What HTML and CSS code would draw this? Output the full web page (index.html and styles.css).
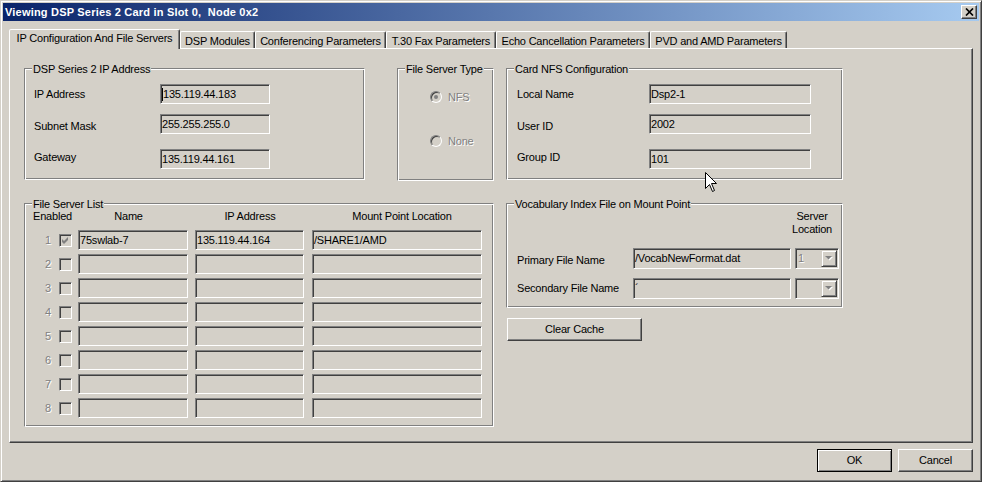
FILE: index.html
```html
<!DOCTYPE html>
<html>
<head>
<meta charset="utf-8">
<title>Viewing DSP Series 2 Card</title>
<link rel="stylesheet" href="styles.css">
</head>
<body>
<div class="window">
  <div class="titlebar">
    <span class="title">Viewing DSP Series 2 Card in Slot 0,  Node 0x2</span>
    <span class="close"><svg width="9" height="8" viewBox="0 0 9 8"><path d="M1 0.5 L8 7.5 M8 0.5 L1 7.5" stroke="#000" stroke-width="1.7" fill="none"/></svg></span>
  </div>

  <div class="tabs">
    <div class="tab selected t1">IP Configuration And File Servers</div>
    <div class="tab t2">DSP Modules</div>
    <div class="tab t3">Conferencing Parameters</div>
    <div class="tab t4">T.30 Fax Parameters</div>
    <div class="tab t5">Echo Cancellation Parameters</div>
    <div class="tab t6">PVD and AMD Parameters</div>
  </div>

  <div class="panel">
    <div class="row1">
      <div class="group g-ip">
        <div class="gtitle">DSP Series 2 IP Address</div>
        <div class="frow">
          <span class="flabel">IP Address</span>
          <span class="edit w110"><span class="caret"></span>135.119.44.183</span>
        </div>
        <div class="frow fr2">
          <span class="flabel down">Subnet Mask</span>
          <span class="edit w110">255.255.255.0</span>
        </div>
        <div class="frow fr3">
          <span class="flabel up">Gateway</span>
          <span class="edit w110">135.119.44.161</span>
        </div>
      </div>

      <div class="group g-fst">
        <div class="gtitle">File Server Type</div>
        <div class="rrow"><span class="radio on"></span><span class="dis rtext">NFS</span></div>
        <div class="rrow rr2"><span class="radio"></span><span class="dis rtext">None</span></div>
      </div>

      <div class="group g-nfs">
        <div class="gtitle">Card NFS Configuration</div>
        <div class="frow">
          <span class="flabel">Local Name</span>
          <span class="edit w162">Dsp2-1</span>
        </div>
        <div class="frow fr2">
          <span class="flabel down">User ID</span>
          <span class="edit w162">2002</span>
        </div>
        <div class="frow fr3">
          <span class="flabel up">Group ID</span>
          <span class="edit w162">101</span>
        </div>
      </div>
    </div>

    <div class="row2">
      <div class="group g-fsl">
        <div class="gtitle">File Server List</div>
        <div class="lhead">
          <span class="h-en">Enabled</span>
          <span class="h-name">Name</span>
          <span class="h-ip">IP Address</span>
          <span class="h-mp">Mount Point Location</span>
        </div>
        <div class="lrows">
          <div class="lrow"><span class="num dis">1</span><span class="chk"><svg width="11" height="11" viewBox="0 0 11 11"><path d="M2 4 L4 6 L8 2 L8 5 L4 9 L2 7 Z" fill="#808080"/></svg></span><span class="edit c-name">75swlab-7</span><span class="edit c-ip">135.119.44.164</span><span class="edit c-mp">/SHARE1/AMD</span></div>
          <div class="lrow"><span class="num dis">2</span><span class="chk"></span><span class="edit c-name"></span><span class="edit c-ip"></span><span class="edit c-mp"></span></div>
          <div class="lrow"><span class="num dis">3</span><span class="chk"></span><span class="edit c-name"></span><span class="edit c-ip"></span><span class="edit c-mp"></span></div>
          <div class="lrow"><span class="num dis">4</span><span class="chk"></span><span class="edit c-name"></span><span class="edit c-ip"></span><span class="edit c-mp"></span></div>
          <div class="lrow"><span class="num dis">5</span><span class="chk"></span><span class="edit c-name"></span><span class="edit c-ip"></span><span class="edit c-mp"></span></div>
          <div class="lrow"><span class="num dis">6</span><span class="chk"></span><span class="edit c-name"></span><span class="edit c-ip"></span><span class="edit c-mp"></span></div>
          <div class="lrow"><span class="num dis">7</span><span class="chk"></span><span class="edit c-name"></span><span class="edit c-ip"></span><span class="edit c-mp"></span></div>
          <div class="lrow"><span class="num dis">8</span><span class="chk"></span><span class="edit c-name"></span><span class="edit c-ip"></span><span class="edit c-mp"></span></div>
        </div>
      </div>

      <div class="rightcol">
        <div class="group g-voc">
          <div class="gtitle">Vocabulary Index File on Mount Point</div>
          <div class="vhead">Server<br>Location</div>
          <div class="vrow">
            <span class="vlabel down2">Primary File Name</span>
            <span class="edit w158">/VocabNewFormat.dat</span>
            <span class="combo"><span class="dis ctext">1</span><span class="dropbtn"><svg width="8" height="5" viewBox="0 0 8 5"><path d="M1 1 H8 L4.5 4.5 Z" fill="#fff"/><path d="M0 0 H7 L3.5 3.5 Z" fill="#808080"/></svg></span></span>
          </div>
          <div class="vrow vr2">
            <span class="vlabel">Secondary File Name</span>
            <span class="edit w158">´</span>
            <span class="combo"><span class="dis ctext"></span><span class="dropbtn"><svg width="8" height="5" viewBox="0 0 8 5"><path d="M1 1 H8 L4.5 4.5 Z" fill="#fff"/><path d="M0 0 H7 L3.5 3.5 Z" fill="#808080"/></svg></span></span>
          </div>
        </div>
        <div class="btn clearcache">Clear Cache</div>
      </div>
    </div>
  </div>

  <div class="buttons">
    <div class="btn default">OK</div>
    <div class="btn">Cancel</div>
  </div>

  <svg class="cursor" width="13" height="21" viewBox="0 0 13 21"><path d="M0.5 0.5 L0.5 16.5 L4.5 12.5 L7.5 19.5 L9.5 18.5 L6.5 11.5 L11.5 11.5 Z" fill="#fff" stroke="#000" stroke-width="1"/></svg>
</div>
</body>
</html>
```

FILE: styles.css
```css
* { box-sizing: border-box; }
html, body { margin: 0; padding: 0; }
body {
  width: 982px;
  height: 482px;
  overflow: hidden;
  background: #d4d0c8;
  font-family: "Liberation Sans", Arial, sans-serif;
  font-size: 11px;
  line-height: 13px;
  letter-spacing: -0.2px;
  color: #000;
}

.window {
  position: relative;
  width: 982px;
  height: 482px;
  border: 1px solid;
  border-color: #d4d0c8 #404040 #404040 #d4d0c8;
  box-shadow: inset 1px 1px #fff, inset -1px -1px #808080;
  padding: 2px;
  display: flex;
  flex-direction: column;
}

.titlebar {
  height: 18px;
  flex: none;
  background: linear-gradient(to right, #0a246a, #a6caf0);
  display: flex;
  align-items: center;
  justify-content: space-between;
  padding: 0 2px;
}
.title { color: #fff; font-weight: bold; white-space: pre; letter-spacing: 0.2px; }
.close {
  width: 16px;
  height: 14px;
  background: #d4d0c8;
  border: 1px solid;
  border-color: #fff #404040 #404040 #fff;
  box-shadow: inset -1px -1px #808080;
  display: flex;
  align-items: center;
  justify-content: center;
}

.tabs {
  display: flex;
  align-items: flex-end;
  height: 19px;
  flex: none;
  margin: 8px 0 0 6px;
}
.tab {
  height: 17px;
  border: 1px solid;
  border-bottom: 0;
  border-color: #fff #404040 transparent #fff;
  box-shadow: inset -1px 0 #808080;
  border-radius: 2px 2px 0 0;
  text-align: center;
  padding-top: 3px;
  white-space: nowrap;
}
.tab.selected {
  height: 20px;
  margin-bottom: -1px;
  position: relative;
  z-index: 1;
  background: #d4d0c8;
  padding-top: 2px;
}
.t1 { width: 171px; }
.t2 { width: 75px; }
.t3 { width: 131px; }
.t4 { width: 110px; }
.t5 { width: 154px; }
.t6 { width: 137px; }

.panel {
  flex: none;
  margin: 0 6px;
  height: 395px;
  border: 1px solid;
  border-color: #fff #404040 #404040 #fff;
  box-shadow: inset -1px -1px #808080;
  padding: 19px 0 0 14px;
}

.row1 { display: flex; align-items: flex-start; height: 113px; }
.row2 { display: flex; align-items: flex-start; margin-top: 22px; }

.group {
  position: relative;
  border: 1px solid;
  border-color: #808080 #fff #fff #808080;
  box-shadow: inset 1px 1px #fff, inset -1px -1px #808080;
  flex: none;
}
.gtitle {
  position: absolute;
  top: -6px;
  left: 7px;
  padding: 0 1px;
  background: #d4d0c8;
  white-space: nowrap;
}

.g-ip { width: 341px; height: 112px; padding: 15px 0 0 9px; }
.g-fst { width: 97px; height: 113px; margin-left: 32px; padding: 22px 0 0 32px; }
.g-nfs { width: 337px; height: 112px; margin-left: 12px; padding: 15px 0 0 10px; }

.frow { display: flex; align-items: center; height: 20px; }
.fr2 { margin-top: 10px; }
.fr3 { margin-top: 15px; }
.g-ip .flabel { width: 126px; }
.g-nfs .flabel { width: 132px; }
.down { padding-top: 4px; }
.up { padding-bottom: 4px; }
.down2 { padding-top: 3px; }

.edit {
  display: flex;
  align-items: center;
  height: 20px;
  flex: none;
  border: 1px solid;
  border-color: #808080 #fff #fff #808080;
  box-shadow: inset 1px 1px #404040, inset -1px -1px #d4d0c8;
  background: #d4d0c8;
  padding-left: 1px;
  white-space: nowrap;
  overflow: hidden;
}
.caret { width: 1px; height: 13px; background: #000; margin-right: 0; }
.w110 { width: 110px; }
.w162 { width: 162px; }
.w158 { width: 158px; height: 21px; }

.dis { color: #808080; text-shadow: 1px 1px 0 #fff; }

.rrow { display: flex; align-items: center; height: 12px; }
.rr2 { margin-top: 32px; }
.radio {
  width: 12px;
  height: 12px;
  flex: none;
  border-radius: 50%;
  border: 1px solid;
  border-color: #808080 #fff #fff #808080;
  box-shadow: inset 1px 1px #404040, inset -1px -1px #d4d0c8;
  background: #d4d0c8;
  display: flex;
  align-items: center;
  justify-content: center;
}
.radio.on::after {
  content: "";
  width: 4px;
  height: 4px;
  border-radius: 50%;
  background: #808080;
}
.rtext { margin-left: 6px; }

.g-fsl { width: 470px; height: 224px; padding: 6px 0 0 0; }
.lhead { display: flex; height: 13px; white-space: nowrap; }
.h-en { width: 49px; padding-left: 8px; }
.h-name { width: 109px; text-align: center; }
.h-ip { width: 134px; text-align: center; }
.h-mp { width: 170px; text-align: center; }
.lrows { margin-top: 7px; display: flex; flex-direction: column; gap: 4px; }
.lrow { display: flex; align-items: center; height: 20px; }
.num { width: 26px; text-align: right; }
.chk {
  width: 13px;
  height: 13px;
  flex: none;
  margin-left: 8px;
  border: 1px solid;
  border-color: #808080 #fff #fff #808080;
  box-shadow: inset 1px 1px #404040, inset -1px -1px #d4d0c8;
  background: #d4d0c8;
  display: flex;
}
.c-name { width: 110px; margin-left: 6px; }
.c-ip { width: 109px; margin-left: 7px; }
.c-mp { width: 170px; margin-left: 8px; }

.rightcol { margin-left: 12px; width: 337px; display: flex; flex-direction: column; }
.g-voc { width: 337px; height: 105px; padding: 6px 0 0 10px; }
.vhead { margin-left: 270px; width: 50px; text-align: center; }
.vrow { display: flex; align-items: center; height: 21px; margin-top: 12px; }
.vr2 { margin-top: 9px; }
.vlabel { width: 116px; white-space: nowrap; }
.combo {
  width: 44px;
  height: 21px;
  flex: none;
  margin-left: 4px;
  border: 1px solid;
  border-color: #808080 #fff #fff #808080;
  box-shadow: inset 1px 1px #404040, inset -1px -1px #d4d0c8;
  background: #d4d0c8;
  padding: 1px;
  display: flex;
  justify-content: space-between;
}
.ctext { padding-left: 1px; line-height: 17px; }
.dropbtn {
  width: 16px;
  height: 17px;
  border: 1px solid;
  border-color: #d4d0c8 #404040 #404040 #d4d0c8;
  box-shadow: inset 1px 1px #fff, inset -1px -1px #808080;
  display: flex;
  align-items: center;
  justify-content: center;
}

.btn {
  width: 75px;
  height: 23px;
  border: 1px solid;
  border-color: #fff #404040 #404040 #fff;
  box-shadow: inset -1px -1px #808080;
  display: flex;
  align-items: center;
  justify-content: center;
  white-space: nowrap;
}
.btn.default {
  border-color: #000;
  box-shadow: inset 1px 1px #fff, inset -1px -1px #808080;
}
.clearcache { width: 135px; margin: 10px 0 0 1px; }

.buttons {
  display: flex;
  justify-content: flex-end;
  gap: 6px;
  margin: 6px 6px 0 0;
  flex: none;
}

.cursor { position: absolute; left: 704px; top: 171px; }
```
